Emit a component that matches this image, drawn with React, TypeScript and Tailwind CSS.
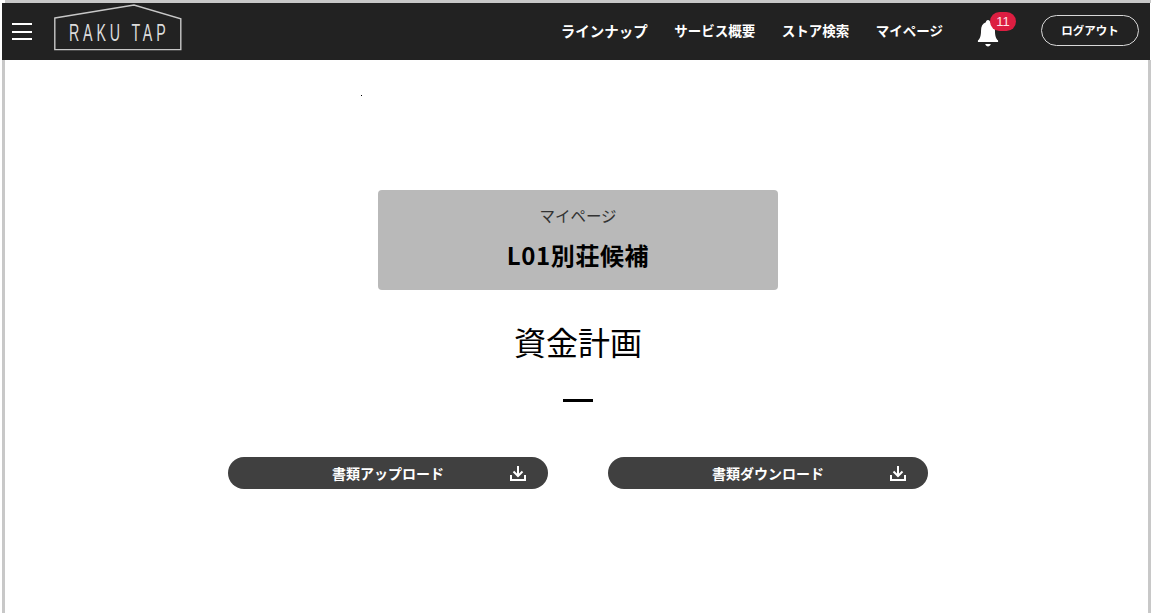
const cjk = "font-['Noto_Sans_CJK_JP','Noto_Sans',sans-serif]";

function Logo() {
  return (
    <svg width="128" height="47" viewBox="0 0 128 47" fill="none" className="shrink-0">
      <path d="M0.8 14 L80 1 L126.800 14.800 V45.600 H0.8 Z" stroke="#c8c8c8" strokeWidth="1.400" />
      <text
        transform="translate(15 37) scale(0.62 1)"
        fill="#dcdcdc"
        fontSize="23"
        fontFamily="Liberation Sans"
        textLength="156"
      >
        RAKU TAP
      </text>
    </svg>
  );
}

function Hamburger() {
  return (
    <div className="flex flex-col gap-[5.5px] w-5">
      <span className="block h-0.5 bg-white" />
      <span className="block h-0.5 bg-white" />
      <span className="block h-0.5 bg-white" />
    </div>
  );
}

function Bell() {
  return (
    <div className="relative w-[22px] h-7">
      <svg width="22" height="28" viewBox="0 0 24 28" className="absolute left-0 top-0" fill="#fff" preserveAspectRatio="none">
        <path d="M12 0c-1.400 0-2.300 1-2.300 2.300C6 3.500 4.400 6.700 4.400 10.400c0 5-.8 7.700-3.400 10.100v1.500h22v-1.500c-2.600-2.400-3.400-5.100-3.400-10.100 0-3.700-1.600-6.900-5.300-8.100C14.300 1 13.400 0 12 0z" />
        <path d="M9 24h6c-.4 1.500-1.600 2.400-3 2.400S9.400 25.500 9 24z" />
      </svg>
      <span className="absolute left-[13px] -top-2 w-[26px] h-[19px] rounded-full bg-[#dc1e41] text-[#ffe4e8] text-[13px] leading-[19px] text-center font-['Liberation_Sans',sans-serif]">
        11
      </span>
    </div>
  );
}

function TrayDownload() {
  return (
    <svg width="16" height="15" viewBox="0 0 16 15" fill="none" stroke="#fff" strokeWidth="2" className="absolute right-[22px] top-[9px]">
      <path d="M1 9v5h14V9" />
      <path d="M8 0v9.500" />
      <path d="M3.500 5.500L8 10l4.500-4.500" />
    </svg>
  );
}

function ActionButton({ label }: { label: string }) {
  return (
    <button className="relative w-80 h-8 rounded-full bg-[#404040] text-white text-sm font-bold flex items-center justify-center">
      {label}
      <TrayDownload />
    </button>
  );
}

export default function App() {
  return (
    <div className={`h-[613px] w-[1156px] bg-white overflow-hidden pl-[2px] flex flex-col ${cjk}`}>
      <div className="h-[3px] w-[1146px] ml-[3px] bg-[#c8c8c8]" />
      <header className="h-[57px] w-[1148px] bg-[#222222] flex items-center pl-[10px] pr-[11px]">
        <Hamburger />
        <div className="ml-[22px] -mt-[9px]">
          <Logo />
        </div>
        <nav className="ml-auto -mt-[2px] flex items-center gap-[26.5px] text-white text-[13.5px] font-bold">
          <a className="text-[14.5px]">ラインナップ</a>
          <a>サービス概要</a>
          <a>ストア検索</a>
          <a>マイページ</a>
        </nav>
        <div className="ml-[34px] mt-[5px]">
          <Bell />
        </div>
        <button className="ml-[42px] -mt-[2px] w-[98px] h-[31px] rounded-full border-[1.5px] border-[#d8d8d8] text-white text-[11.5px] font-bold">
          ログアウト
        </button>
      </header>
      <main className="flex-1 w-[1149px] border-x-[3px] border-[#c8c8c8] pl-[3px] flex flex-col items-center">
        <div className="w-full pl-[353px] pt-[35px] h-[130px]">
          <div className="w-px h-px bg-black" />
        </div>
        <div className="w-[400px] h-[100px] rounded bg-[#b9b9b9] flex flex-col items-center text-center">
          <p className="mt-[13px] text-[15.5px] leading-6 font-normal text-[#333333]">マイページ</p>
          <p className="mt-[12px] text-2xl leading-8 font-bold tracking-[0.6px] text-black">L01別荘候補</p>
        </div>
        <h1 className="mt-[27px] text-[32px] leading-12 font-normal text-black">資金計画</h1>
        <div className="mt-[34px] w-[30px] h-[3px] bg-black" />
        <div className="mt-[55px] flex gap-[60px]">
          <ActionButton label="書類アップロード" />
          <ActionButton label="書類ダウンロード" />
        </div>
      </main>
    </div>
  );
}
